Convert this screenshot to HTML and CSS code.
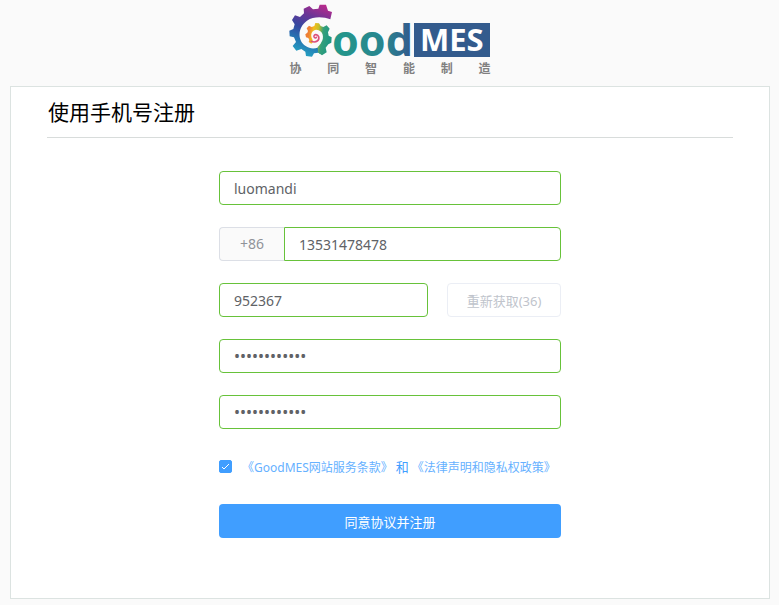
FILE: index.html
```html
<!DOCTYPE html>
<html lang="zh-CN">
<head>
<meta charset="utf-8">
<meta name="viewport" content="width=device-width, initial-scale=1">
<title>GoodMES</title>
<link rel="stylesheet" href="styles.css">
</head>
<body>
<header class="brand">
  <svg class="brand-logo" viewBox="290 4 202 54" role="img" aria-label="GoodMES">
    <defs>
      <linearGradient id="ring" gradientUnits="userSpaceOnUse" x1="145" y1="20" x2="85" y2="165">
        <stop offset="0" stop-color="#b72a8c"/>
        <stop offset=".28" stop-color="#6a3596"/>
        <stop offset=".55" stop-color="#3548a0"/>
        <stop offset=".8" stop-color="#2678b4"/>
        <stop offset="1" stop-color="#259cc0"/>
      </linearGradient>
      <linearGradient id="swirl" gradientUnits="userSpaceOnUse" x1="86" y1="118" x2="150" y2="128">
        <stop offset="0" stop-color="#ee7f35"/>
        <stop offset=".2" stop-color="#f4bd1c"/>
        <stop offset=".42" stop-color="#c5bf2a"/>
        <stop offset=".65" stop-color="#35a07a"/>
        <stop offset="1" stop-color="#1f9783"/>
      </linearGradient>
      <linearGradient id="word" gradientUnits="userSpaceOnUse" x1="333" y1="0" x2="411" y2="0">
        <stop offset="0" stop-color="#23998a"/>
        <stop offset=".7" stop-color="#28838f"/>
        <stop offset="1" stop-color="#335b8d"/>
      </linearGradient>
    </defs>
    <g transform="translate(280 0) scale(.3333)">
      <path fill="url(#ring)" d="M159 36 147 32 141 14 122 14 118 26 102 28 91 18 74 26 75 40 63 51 48 46 39 60 47 73 43 87 31 92 32 109 45 112 51 126 41 138 52 152 67 147 79 155 81 168 99 170 105 160 118 158 124 162 130 134C118 146 96 150 80 138 56 122 54 84 84 62 104 48 134 50 154 58Z"/>
      <path fill="url(#swirl)" d="M118 158 129 166 143 157 140 143 148 133 157 128 158 112 149 107 147 97 152 86 143 76 133 81 125 78 120 70 109 69 106 78 98 81 90 77 83 85 87 93 85 98 79 103 81 112 88 114 91 120 89 126 97 131 102 126 100 118C92 102 100 90 112 89 132 90 137 112 127 127 124 133 121 137 116 141Z"/>
      <path fill="none" stroke="#dc4f78" stroke-width="5" stroke-linecap="round" d="M97 124C112 130 122 120 119 110 115 101 104 103 105 110 106 115 111 115 112 112"/>
    </g>
    <text class="word" x="333" y="56" fill="url(#word)">ood</text>
    <rect x="415" y="23" width="76" height="34" fill="#335b8d"/>
    <text class="tag" x="421" y="51">MES</text>
  </svg>
  <p class="slogan"><span>协</span><span>同</span><span>智</span><span>能</span><span>制</span><span>造</span></p>
</header>
<main class="panel">
  <h1 class="title">使用手机号注册</h1>
  <form class="form">
    <input class="field" type="text" value="luomandi" aria-label="用户名">
    <div class="phone">
      <label class="prefix" for="phone">+86</label>
      <input class="field phone-field" id="phone" type="tel" value="13531478478">
    </div>
    <div class="code">
      <input class="field" type="text" value="952367" aria-label="验证码">
      <button class="resend" type="button" disabled>重新获取(36)</button>
    </div>
    <input class="field secret" type="password" value="abcdefghijkl" aria-label="密码">
    <input class="field secret" type="password" value="abcdefghijkl" aria-label="确认密码">
    <div class="terms">
      <span class="tick">
        <input class="check" id="agree" type="checkbox" checked aria-label="同意">
        <svg class="mark" viewBox="0 0 13 13" aria-hidden="true"><path d="M3 7 5 9 10 4"/></svg>
      </span>
      <a href="#terms">《GoodMES网站服务条款》</a>
      <label class="and" for="agree">和</label>
      <a href="#privacy">《法律声明和隐私权政策》</a>
    </div>
    <button class="submit" type="submit">同意协议并注册</button>
  </form>
</main>
</body>
</html>
```
FILE: styles.css
```css
* { box-sizing: border-box; }

body {
  margin: 0;
  background: #fafafa;
  color: #606266;
  font-family: "Noto Sans", "Noto Sans CJK SC", sans-serif;
  font-size: 14px;
}

input, button { font: inherit; margin: 0; }

.brand {
  width: 202px;
  margin: 0 auto;
  padding: 4px 0 9px;
}

.brand-logo { display: block; width: 100%; overflow: visible; }

.word, .tag {
  font-family: "Noto Sans", sans-serif;
  font-weight: 700;
}

.word { font-size: 43px; }
.tag { font-size: 31px; fill: #fff; }

.slogan {
  display: flex;
  justify-content: space-between;
  margin: 0;
  padding: 3px 0 0 1px;
  color: #808080;
  font-size: 12px;
  font-weight: 700;
  line-height: 16px;
}

.panel {
  margin: 0 9px 6px 10px;
  padding: 0 36px 60px;
  background: #fff;
  border: 1px solid #dce3e1;
}

.title {
  margin: 0;
  padding: 10px 1px;
  border-bottom: 1px solid #d8dcdb;
  color: #000;
  font-size: 21px;
  font-weight: 400;
  line-height: 30px;
}

.form {
  display: flex;
  flex-direction: column;
  gap: 22px;
  max-width: 342px;
  margin: 33px auto 0;
}

.field {
  width: 100%;
  min-width: 0;
  height: 34px;
  padding: 0 14px;
  background: #fff;
  border: 1px solid #67c23a;
  border-radius: 4px;
  color: #606266;
  outline: none;
}

.secret { font-size: 16px; }

.phone { display: flex; }

.prefix {
  flex: none;
  padding: 0 20px;
  background: #fafafa;
  border: 1px solid #dcdfe6;
  border-right: 0;
  border-radius: 4px 0 0 4px;
  color: #909399;
  line-height: 32px;
}

.phone-field { border-radius: 0 4px 4px 0; }

.code { display: flex; gap: 19px; }

.resend {
  flex: 0 0 114px;
  padding: 0;
  background: #fff;
  border: 1px solid #ebeef5;
  border-radius: 4px;
  color: #c0c4cc;
  font-size: 13px;
}

.terms {
  display: flex;
  align-items: center;
  height: 31px;
  color: #409eff;
  font-size: 12px;
  white-space: nowrap;
}

.terms a { color: #66b1ff; text-decoration: none; }

.and { margin: 0 3px; font-size: 13px; }

.tick {
  display: grid;
  margin-right: 10px;
}

.check, .mark {
  grid-area: 1 / 1;
  width: 13px;
  height: 13px;
}

.check {
  appearance: none;
  border: 1px solid #409eff;
  border-radius: 2px;
}

.check:checked { background: #409eff; }

.mark {
  fill: none;
  stroke: #fff;
  stroke-width: 1;
  pointer-events: none;
}

.submit {
  height: 34px;
  padding: 0;
  background: #409eff;
  border: 0;
  border-radius: 4px;
  color: #fff;
  font-size: 13px;
}
```
